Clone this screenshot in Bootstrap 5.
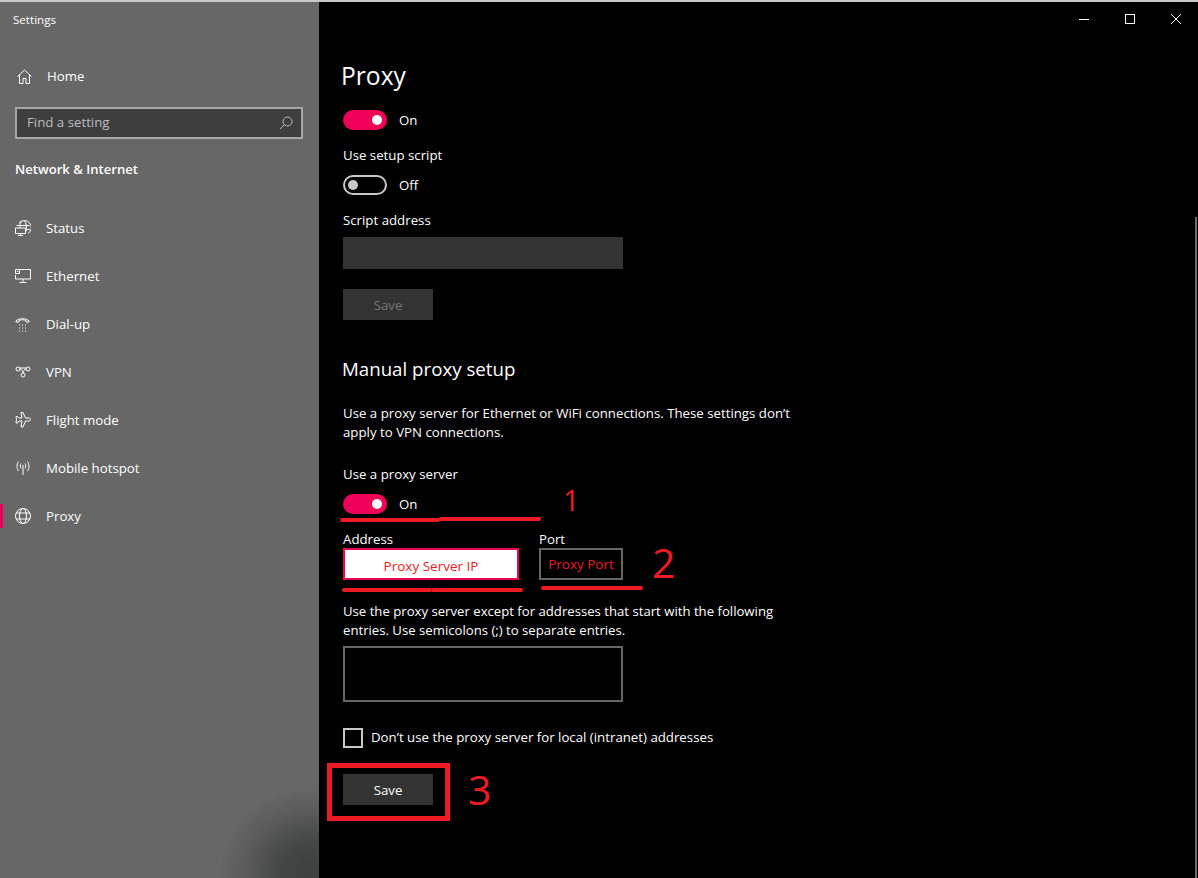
<!DOCTYPE html>
<html lang="en"><head><meta charset="utf-8"><title>Settings</title>
<link href="https://cdn.jsdelivr.net/npm/bootstrap@5.3.0/dist/css/bootstrap.min.css" rel="stylesheet">
<style>
html,body{height:100%;overflow:hidden;background:#000}
body{font-family:"Open Sans","Noto Sans","Liberation Sans",sans-serif;font-size:13.25px;color:#fff}
.win{height:878px;border-top:2px solid #c8c8c8;position:relative}
.side{width:319px;flex:none;height:100%;background:#676767;background-image:radial-gradient(ellipse 90px 85px at 310px 870px,#3e3f3f 0%,#454646 35%,#5a5a5a 70%,rgba(103,103,103,0) 100%)}
.ttl{font-size:11.6px;padding:10px 0 0 13px;line-height:15px;height:54px}
.homerow{height:40px;padding-left:17px;gap:15px}
.homerow span{padding-top:2px}
.srch{margin:11px 16px 0 15px;height:32px;border:2px solid #a6a6a6;background:#3e3e3e;color:#bdbdbd;padding:0 8px 0 10px}
.nethd{font-weight:600;font-size:13.1px;padding:20px 0 0 15px;line-height:20px;height:65px}
.nv{height:48px;padding-left:15px;gap:15px;position:relative;line-height:18px}
.nv svg,.homerow svg{flex:none}
.nvmark{position:absolute;left:0;top:12px;width:3px;height:24px;background:#ee0058}
.ico{fill:none;stroke:#fff;stroke-width:1}
.mainp{flex:1;position:relative;padding:0 0 0 24px;overflow:hidden}
.caps{right:-1px!important}
.capb{width:46px;height:34px}
.hd1{font-size:24.6px;font-weight:400;line-height:36px;margin:56px 0 0 -2px;height:36px}
.swt{width:44px;height:20px;border-radius:10px;background:#ee0058;position:relative;flex:none}
.swt i{position:absolute;top:5px;right:5px;width:10px;height:10px;border-radius:50%;background:#fff}
.swoff{background:transparent;border:2px solid #c8c8c8}
.swoff i{top:3px;left:3px;right:auto;background:#c8c8c8}
.swrow{gap:12px;height:20px;line-height:20px}
.lbl{line-height:18px;height:18px}
.fld{display:block;background:#333;height:32px;width:280px}
.bt{display:block;width:90px;height:31px;line-height:33px;background:#333;text-align:center;color:#fff}
.btdis{color:#777}
.hd2{font-size:18.7px;font-weight:400;line-height:24px;height:24px;margin-left:-1px}
.para{width:460px;line-height:19px;margin:0}
.para2{width:450px;font-size:13.17px}
.ad{width:176px;height:32px;background:#fff;border:2px solid #ee0058;color:#ed1c24;line-height:28px;padding-top:2px;text-align:center;font-size:13.5px}
.pt{width:84px;height:32px;border:2px solid #666;color:#ed1c24;line-height:28px;text-align:center;font-size:13.5px}
.ta{width:280px;height:56px;border:2px solid #666}
.chk{width:20px;height:20px;border:2px solid #c8c8c8;flex:none}
.mrkup{position:absolute;background:#ed1c24;border-radius:2px;height:4px}
.num{position:absolute;color:#ed1c24;font-family:"Open Sans",sans-serif;line-height:1}
.svbox{position:absolute;left:8px;top:761px;width:123px;height:58px;border:5px solid #ed1c24}
.sbar{position:absolute;right:1px;top:215px;width:2px;height:661px;background:#6a6a6a}
</style></head><body>
<div class="win d-flex">
<aside class="side">
<div class="ttl">Settings</div>
<div class="homerow d-flex align-items-center"><svg class="ico" width="15" height="15" viewBox="0 0 15 15"><path d="M.5 7.500 7.500 1l7 6.500M2.500 6v8.500h3.500V9.500h3v5h3.500V6"/></svg><span>Home</span></div>
<div class="srch d-flex align-items-center justify-content-between"><span>Find a setting</span><svg width="14" height="14" viewBox="0 0 14 14" fill="none" stroke="#bdbdbd"><circle cx="8.500" cy="5.500" r="4.500"/><path d="M5.300 8.700 1 13"/></svg></div>
<div class="nethd">Network &amp; Internet</div>
<div class="nv d-flex align-items-center"><svg class="ico" width="16" height="16" viewBox="0 0 16 16"><path d="M4 3a7 7 0 1 1 9 10.500M1.500 5.500h13M6.500 1c-1 1.500-1.500 3-1.500 4.500V8M9.500 1c1.500 2 2 4 2 6 0 2-.5 4-1 5.500M11.500 9.500h3M.5 8h10v5.500H.5zM5.500 13.500V15M3 15.500h5"/></svg><span>Status</span></div>
<div class="nv d-flex align-items-center"><svg class="ico" width="16" height="16" viewBox="0 0 16 16"><path d="M4.500 1.500h11v9.500H.5V7M.5 1.500h4v4h-4zM2 3.500h1.500M8 11v3M4.500 14.500h7"/></svg><span>Ethernet</span></div>
<div class="nv d-flex align-items-center"><svg class="ico" width="16" height="16" viewBox="0 0 16 16"><path d="M1 6V5c2-3 11-3 13 0v1h-3V4.500c-2-1-5-1-7 0V6z"/><path stroke-dasharray="1 2" d="M4 9h8M4 12h8M4 15h8"/></svg><span>Dial-up</span></div>
<div class="nv d-flex align-items-center"><svg class="ico" width="16" height="16" viewBox="0 0 16 16"><circle cx="3" cy="5" r="2"/><circle cx="13" cy="5" r="2"/><circle cx="8" cy="11" r="2"/><path d="M5 5c2 0 2 2 3 4M11 5c-2 0-2 2-3 4M5 4h6"/></svg><span>VPN</span></div>
<div class="nv d-flex align-items-center"><svg class="ico" width="16" height="16" viewBox="0 0 16 16"><path d="M6 .5h2l2.500 5.500H14c2 0 2 3 0 3h-3.500L8 15H6l1-6H4L2.500 11H1l.5-3.500L1 4.500h1.500L4 6h3z"/></svg><span>Flight mode</span></div>
<div class="nv d-flex align-items-center"><svg class="ico" width="16" height="16" viewBox="0 0 16 16"><path d="M8 5v10M6 3.500c-1 1.500-1 3.500 0 5M10 3.500c1 1.500 1 3.500 0 5M3.500 1.500c-2 3-2 6.500 0 9.500M12.500 1.500c2 3 2 6.500 0 9.500"/></svg><span>Mobile hotspot</span></div>
<div class="nv d-flex align-items-center"><span class="nvmark"></span><svg class="ico" width="16" height="16" viewBox="0 0 16 16"><circle cx="8" cy="8" r="7.500"/><ellipse cx="8" cy="8" rx="3.500" ry="7.500"/><path d="M1.200 5h13.600M1.200 11h13.600"/></svg><span>Proxy</span></div>
</aside>
<main class="mainp">
<div class="d-flex justify-content-end caps position-absolute top-0 end-0">
<div class="capb d-flex align-items-center justify-content-center"><svg width="10" height="10" viewBox="0 0 10 10" stroke="#fff" fill="none"><path d="M0 5.500h10"/></svg></div>
<div class="capb d-flex align-items-center justify-content-center"><svg width="10" height="10" viewBox="0 0 10 10" stroke="#fff" fill="none"><rect x=".5" y=".5" width="9" height="9"/></svg></div>
<div class="capb d-flex align-items-center justify-content-center"><svg width="10" height="10" viewBox="0 0 10 10" stroke="#fff" fill="none"><path d="M0 0l10 10M10 0 0 10"/></svg></div>
</div>
<div class="hd1">Proxy</div>
<div class="swrow d-flex" style="margin-top:16px"><div class="swt"><i></i></div><span>On</span></div>
<div class="lbl" style="margin-top:16px">Use setup script</div>
<div class="swrow d-flex" style="margin-top:11px"><div class="swt swoff"><i></i></div><span>Off</span></div>
<div class="lbl" style="margin-top:16px">Script address</div>
<div class="fld" style="margin-top:8px"></div>
<div class="bt btdis" style="margin-top:20px">Save</div>
<div class="hd2" style="margin-top:37px">Manual proxy setup</div>
<p class="para" style="margin-top:23px">Use a proxy server for Ethernet or WiFi connections. These settings don’t apply to VPN connections.</p>
<div class="lbl" style="margin-top:23px">Use a proxy server</div>
<div class="swrow d-flex" style="margin-top:11px"><div class="swt"><i></i></div><span>On</span></div>
<div class="d-flex" style="margin-top:16px;gap:20px">
<div><div class="lbl">Address</div><div class="ad">Proxy Server IP</div></div>
<div><div class="lbl">Port</div><div class="pt">Proxy Port</div></div>
</div>
<p class="para para2" style="margin-top:22px">Use the proxy server except for addresses that start with the following entries. Use semicolons (;) to separate entries.</p>
<div class="ta" style="margin-top:6px"></div>
<div class="d-flex align-items-center" style="margin-top:26px;gap:8px"><div class="chk"></div><span>Don’t use the proxy server for local (intranet) addresses</span></div>
<div class="bt" style="margin-top:26px">Save</div>
<div class="mrkup" style="left:21px;top:516px;width:100px"></div><div class="mrkup" style="left:120px;top:515px;width:102px"></div>
<div class="mrkup" style="left:23px;top:586px;width:90px"></div><div class="mrkup" style="left:112px;top:586px;width:92px"></div>
<div class="mrkup" style="left:222px;top:584px;width:102px"></div>
<div class="num" style="left:244px;top:483px;font-size:29px">1</div>
<div class="num" style="left:333px;top:540px;font-size:41px">2</div>
<div class="num" style="left:149px;top:767px;font-size:41px">3</div>
<div class="svbox"></div>
<div class="sbar"></div>
</main>
</div>
</body></html>
